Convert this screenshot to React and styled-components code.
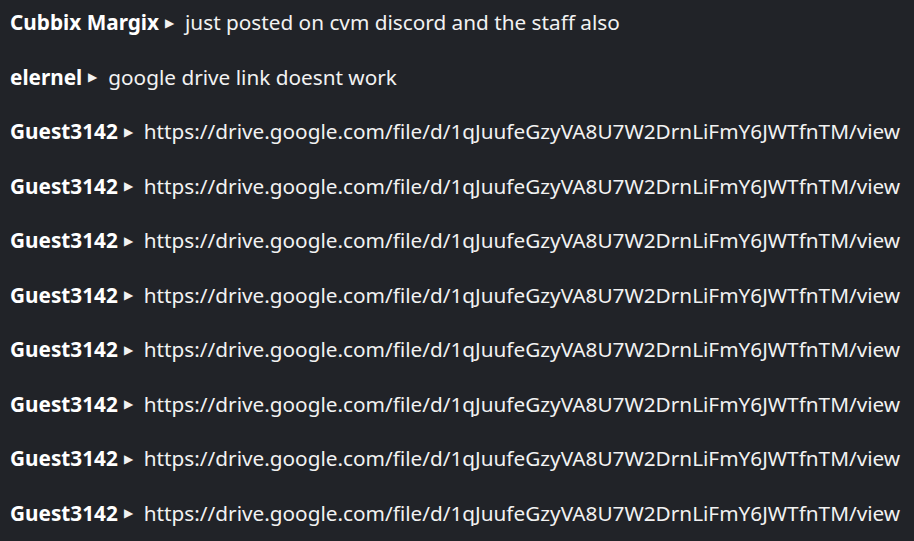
import React from "react";
import styled, { createGlobalStyle } from "styled-components";

const GlobalStyle = createGlobalStyle`
  html, body {
    margin: 0;
    padding: 0;
    background: #212328;
  }
`;

const Log = styled.div`
  width: 914px;
  height: 541px;
  background: #212328;
  color: #f2f2f2;
  font-family: "Noto Sans", "Open Sans", sans-serif;
  font-size: 20.75px;
  display: flex;
  flex-direction: column;
  gap: 10.55px;
  padding: 0 10px;
  box-sizing: border-box;
  overflow: hidden;
`;

const Row = styled.div`
  height: 44px;
  flex-shrink: 0;
  display: flex;
  align-items: center;
  white-space: nowrap;
`;

const Name = styled.span`
  font-weight: 700;
  color: #ffffff;
`;

const Arrow = styled.span`
  font-size: 12px;
  margin: 0 11px 0 6px;
  color: #f2f2f2;
`;

const Text = styled.span`
  color: #f2f2f2;
`;

const url = "https://drive.google.com/file/d/1qJuufeGzyVA8U7W2DrnLiFmY6JWTfnTM/view";

const messages = [
  { user: "Cubbix Margix", text: "just posted on cvm discord and the staff also" },
  { user: "elernel", text: "google drive link doesnt work" },
  ...Array.from({ length: 8 }, () => ({ user: "Guest3142", text: url })),
];

export default function App() {
  return (
    <>
      <GlobalStyle />
      <Log>
        {messages.map((m, i) => (
          <Row key={i}>
            <Name>{m.user}</Name>
            <Arrow>▶</Arrow>
            <Text>{m.text}</Text>
          </Row>
        ))}
      </Log>
    </>
  );
}
